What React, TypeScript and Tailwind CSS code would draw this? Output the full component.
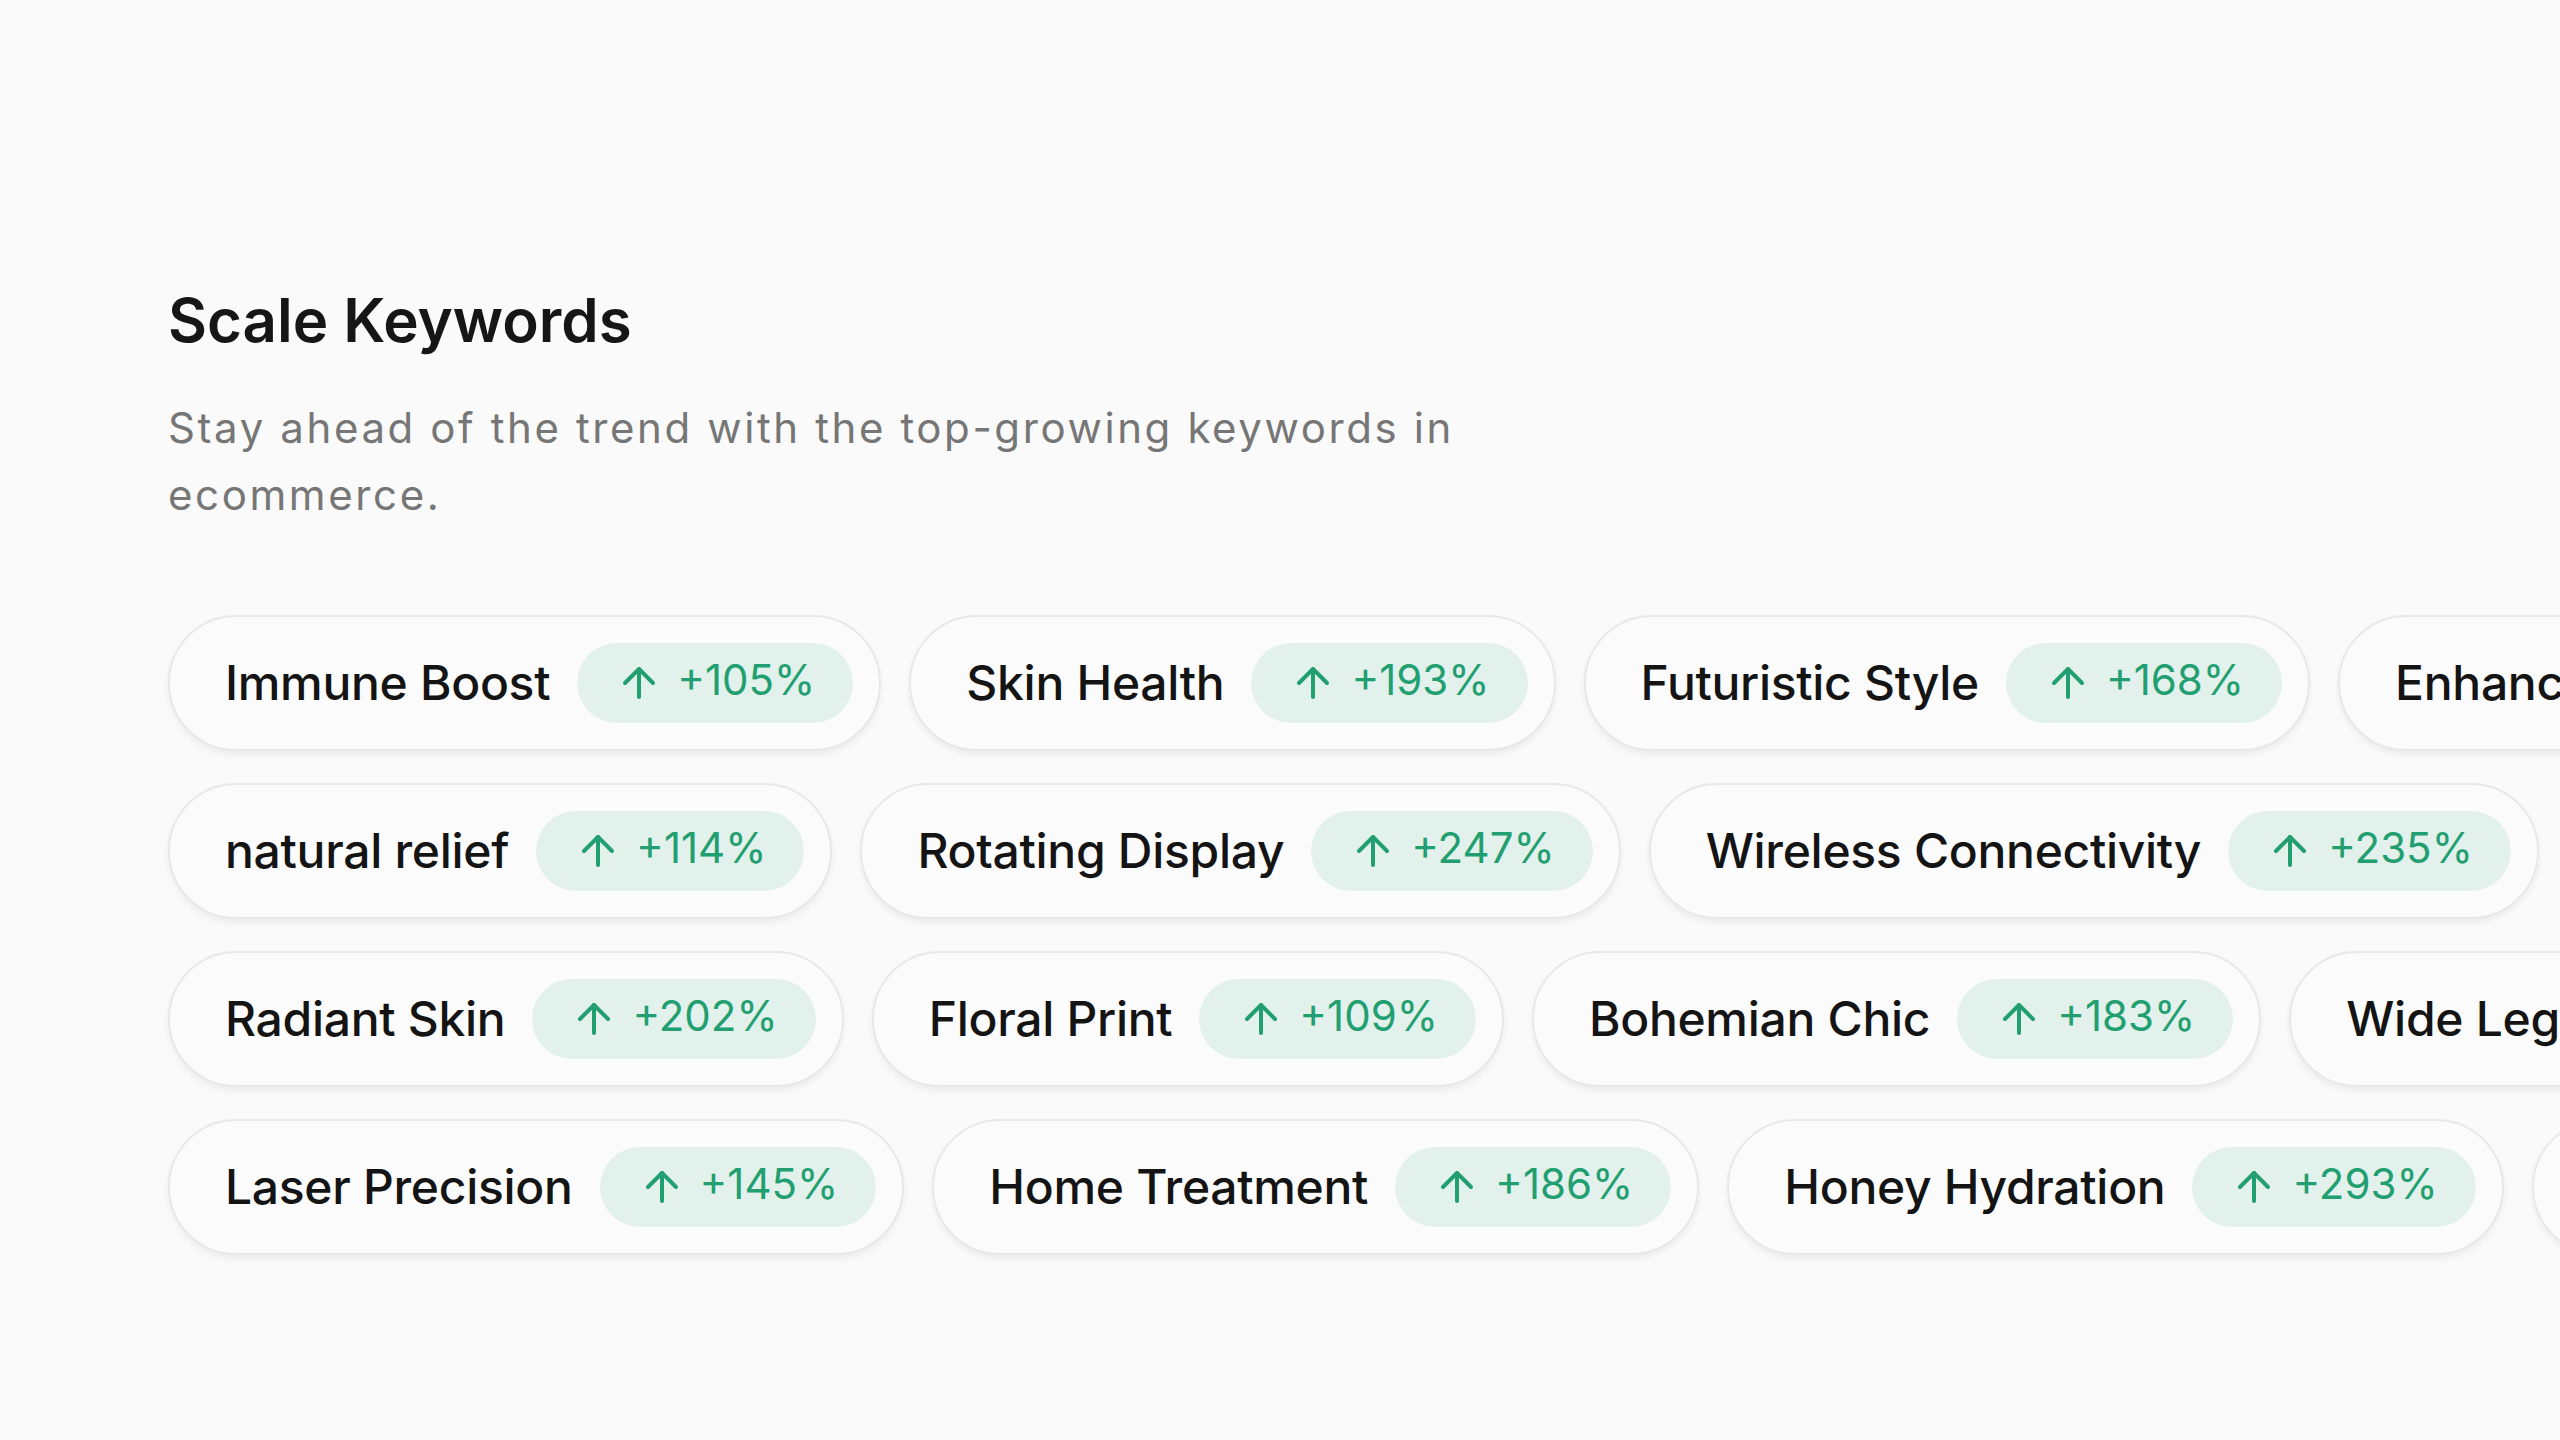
import React from 'react';
import { ArrowUp } from 'lucide-react';

type Keyword = { name: string; growth: number };

const rows: Keyword[][] = [
  [
    { name: 'Immune Boost', growth: 105 },
    { name: 'Skin Health', growth: 193 },
    { name: 'Futuristic Style', growth: 168 },
    { name: 'Enhanced Comfort', growth: 121 },
  ],
  [
    { name: 'natural relief', growth: 114 },
    { name: 'Rotating Display', growth: 247 },
    { name: 'Wireless Connectivity', growth: 235 },
    { name: 'Pain Relief', growth: 157 },
  ],
  [
    { name: 'Radiant Skin', growth: 202 },
    { name: 'Floral Print', growth: 109 },
    { name: 'Bohemian Chic', growth: 183 },
    { name: 'Wide Leg Pants', growth: 176 },
  ],
  [
    { name: 'Laser Precision', growth: 145 },
    { name: 'Home Treatment', growth: 186 },
    { name: 'Honey Hydration', growth: 293 },
    { name: 'Gentle Formula', growth: 138 },
  ],
];

const KeywordPill = ({ keyword }: { keyword: Keyword }) => (
  <div className="flex shrink-0 items-center gap-[27px] rounded-full border-2 border-[#e8e8e8] bg-[#fbfbfb] py-[26px] pl-[55px] pr-[26px] shadow-[0_4px_6px_rgba(0,0,0,0.06)]">
    <span className="whitespace-nowrap text-[48px] font-medium leading-none tracking-[-0.3px] text-[#141414]">
      {keyword.name}
    </span>
    <div className="flex h-[80px] items-center gap-[14px] rounded-full bg-[#e2f1eb] px-[38px] text-[#229f70]">
      <ArrowUp size={48} strokeWidth={2} />
      <span className="whitespace-nowrap pb-[6px] text-[42px] font-normal leading-none">
        +{keyword.growth}%
      </span>
    </div>
  </div>
);

export default function App() {
  return (
    <div
      className="min-h-screen w-full overflow-hidden bg-[#fafafa] pl-[168px] pt-[283px]"
      style={{ fontFamily: 'Inter, "Noto Sans", sans-serif' }}
    >
      <h2 className="text-[60px] font-semibold leading-[75px] text-[#161616]">Scale Keywords</h2>
      <p className="mt-[36px] max-w-[1380px] text-[42px] leading-[67px] tracking-[2.6px] text-[#767676]">
        Stay ahead of the trend with the top-growing keywords in ecommerce.
      </p>

      {/* Keyword rows run past the right edge */}
      <div className="mt-[87px] flex flex-col gap-[32px]">
        {rows.map((row, i) => (
          <div key={i} className="flex w-max gap-[28px]">
            {row.map((keyword) => (
              <KeywordPill key={keyword.name} keyword={keyword} />
            ))}
          </div>
        ))}
      </div>
    </div>
  );
}
